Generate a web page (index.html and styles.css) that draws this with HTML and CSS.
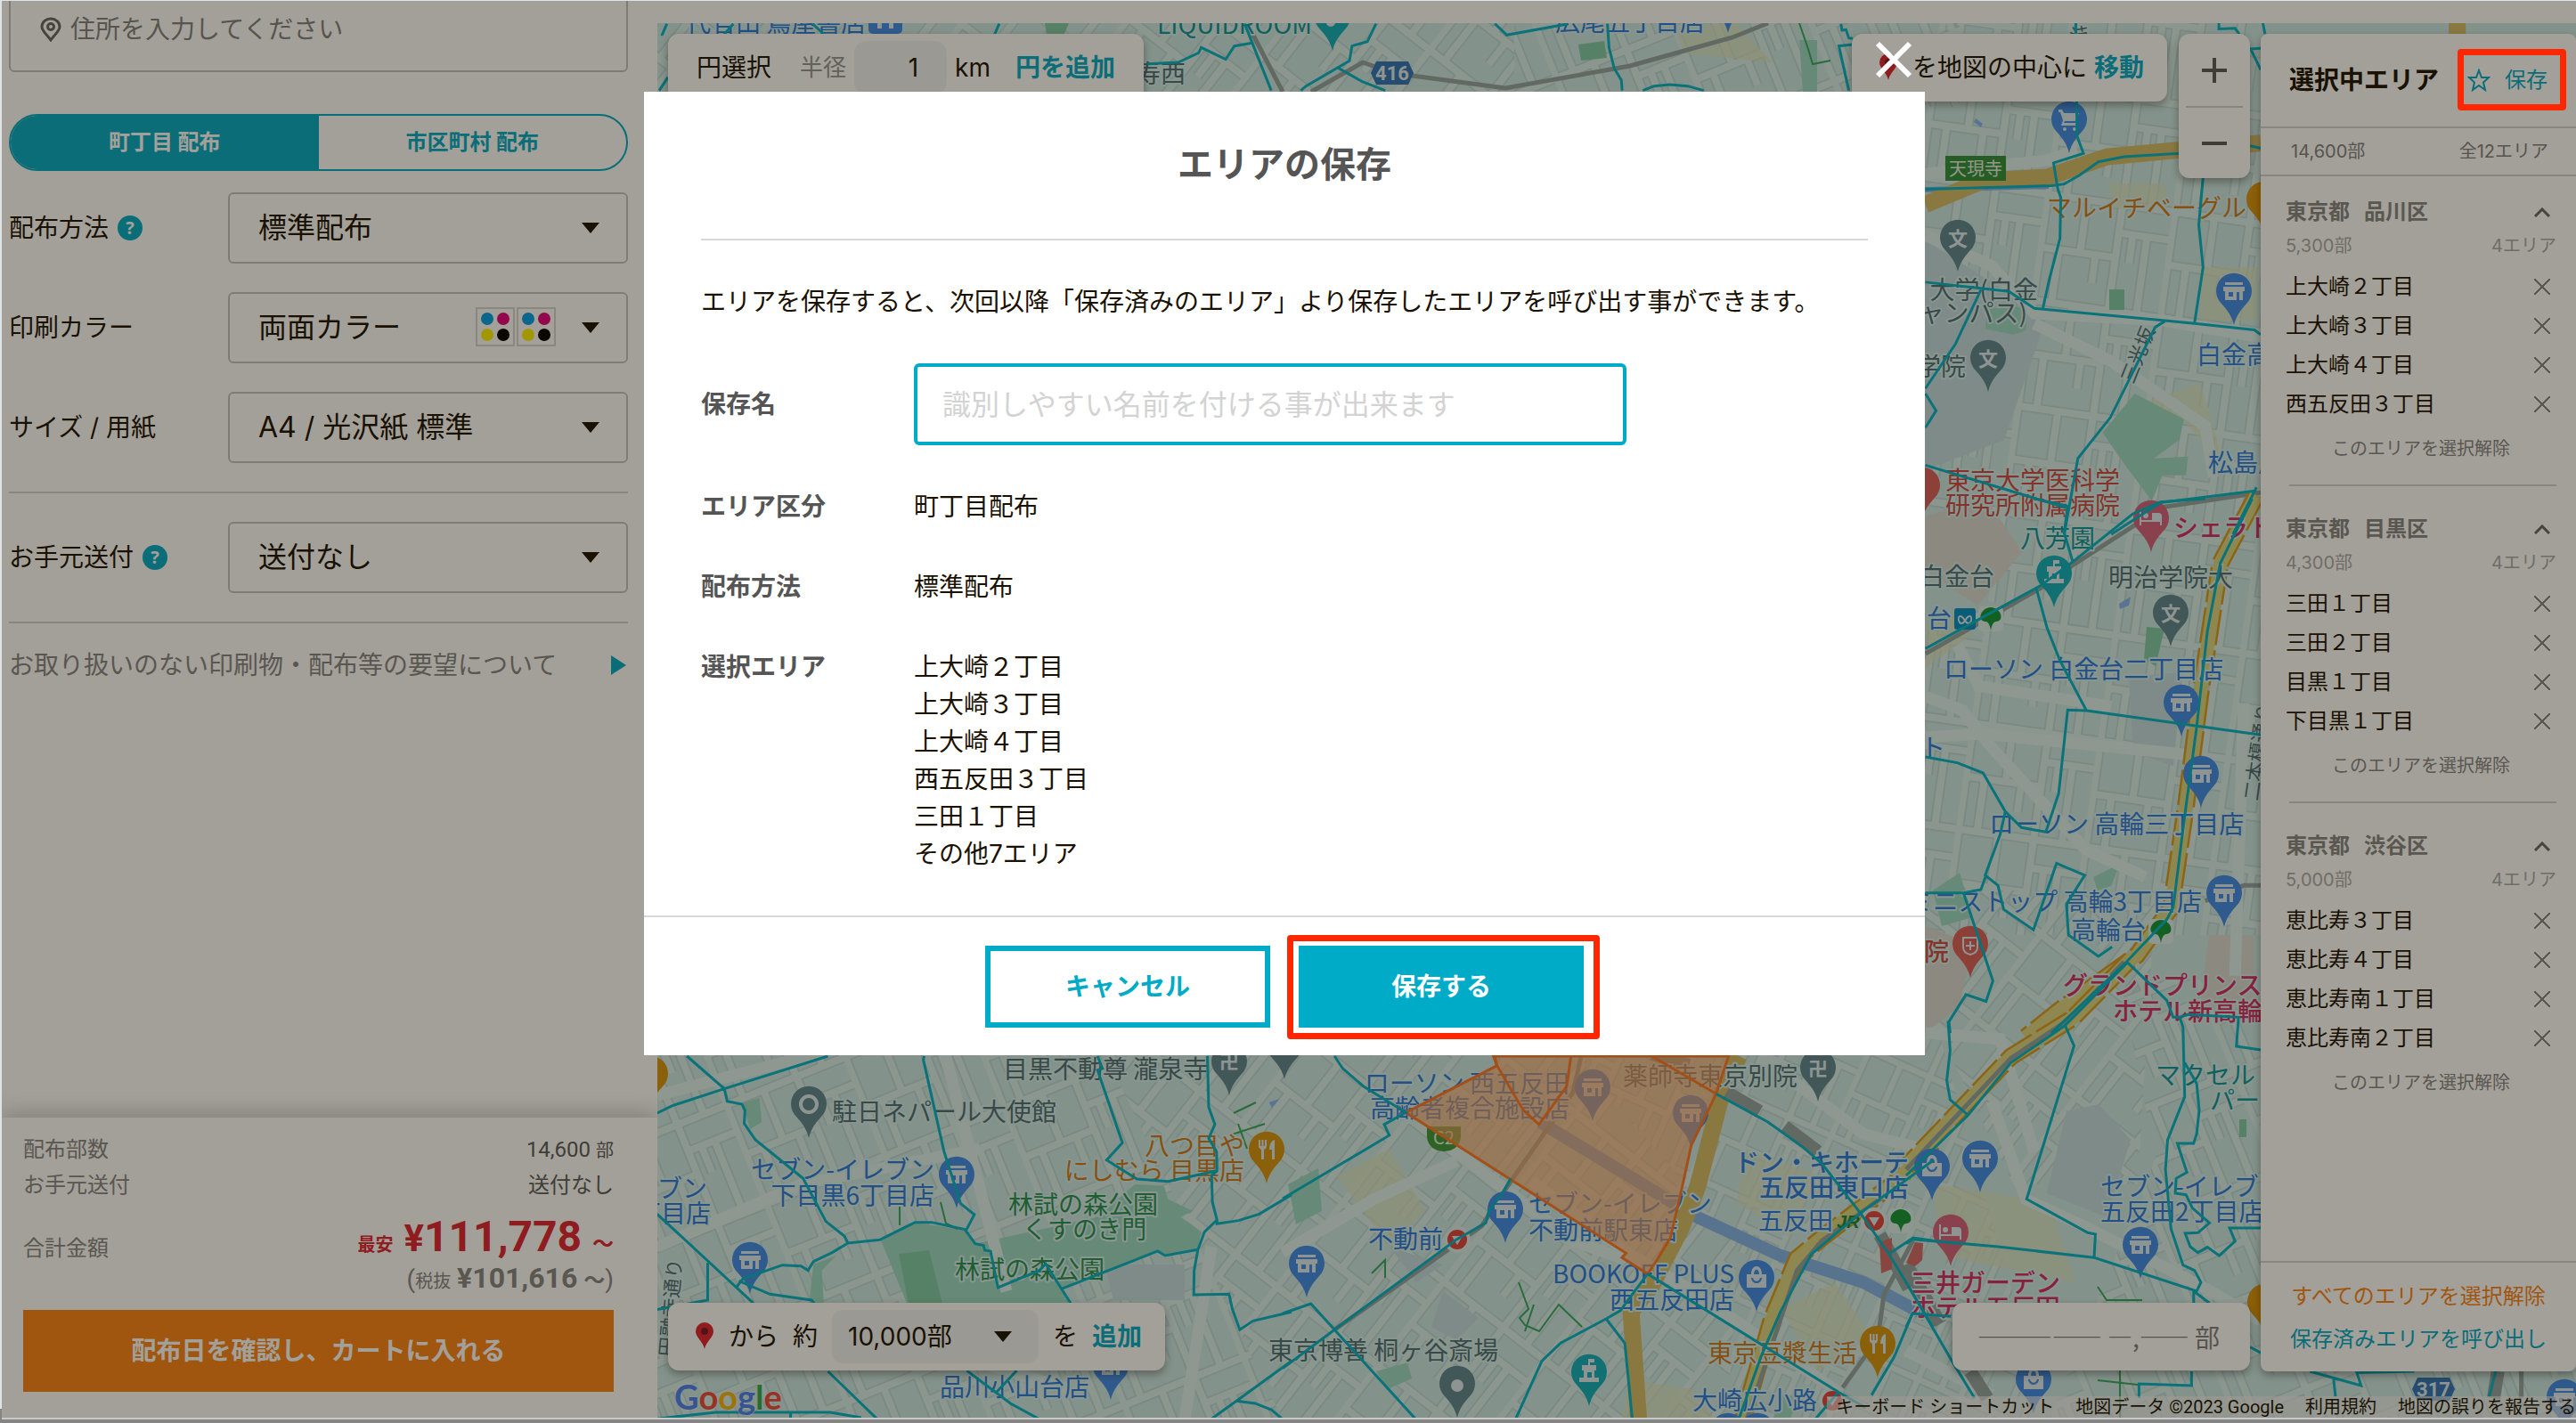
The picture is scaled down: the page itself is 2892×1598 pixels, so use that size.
FILE: index.html
```html
<!DOCTYPE html>
<html lang="ja">
<head>
<meta charset="utf-8">
<title>エリアの保存</title>
<link rel="stylesheet" href="styles.css">
</head>
<body>
<div class="app">
  <aside class="order">
    <form class="order-form">
      <label class="address">
        <svg class="address-icon" viewBox="0 0 24 28" aria-hidden="true"><path d="M12 26C8 20 2 16 2 11a10 9 0 0 1 20 0c0 5-6 9-10 15Z"/><circle cx="12" cy="11" r="3.5"/></svg>
        <input class="address-input" type="text" placeholder="住所を入力してください" aria-label="住所">
      </label>
      <div class="tabs">
        <button class="tab tab-active" type="button">町丁目 配布</button>
        <button class="tab" type="button">市区町村 配布</button>
      </div>
      <div class="fields">
        <div class="field">
          <label class="field-label" for="method">配布方法</label>
          <button class="help" type="button">?</button>
          <div class="select-box"><select id="method"><option>標準配布</option></select><span class="caret"></span></div>
        </div>
        <div class="field">
          <label class="field-label" for="color">印刷カラー</label>
          <div class="select-box"><select id="color"><option>両面カラー</option></select>
            <span class="inks"><span class="ink"><i class="c"></i><i class="m"></i><i class="y"></i><i class="k"></i></span><span class="ink"><i class="c"></i><i class="m"></i><i class="y"></i><i class="k"></i></span></span>
            <span class="caret"></span></div>
        </div>
        <div class="field">
          <label class="field-label" for="size">サイズ / 用紙</label>
          <div class="select-box"><select id="size"><option>A4 / 光沢紙 標準</option></select><span class="caret"></span></div>
        </div>
      </div>
      <div class="fields">
        <div class="field">
          <label class="field-label" for="ship">お手元送付</label>
          <button class="help" type="button">?</button>
          <div class="select-box"><select id="ship"><option>送付なし</option></select><span class="caret"></span></div>
        </div>
      </div>
      <a class="request" href="#"><span>お取り扱いのない印刷物・配布等の要望について</span><span class="request-arrow"></span></a>
    </form>
    <section class="summary">
      <dl class="totals">
        <div class="total-row"><dt>配布部数</dt><dd>14,600 <small>部</small></dd></div>
        <div class="total-row"><dt>お手元送付</dt><dd>送付なし</dd></div>
        <div class="total-row total-price"><dt>合計金額</dt><dd>
          <p class="price"><span class="price-tag">最安</span> <span class="yen">¥</span>111,778 <span class="tilde">～</span></p>
          <p class="price-net">(<small>税抜</small> <b>¥101,616</b> <span class="tilde">～</span>)</p></dd></div>
      </dl>
      <button class="cart" type="button">配布日を確認し、カートに入れる</button>
    </section>
  </aside>

  <main class="map">
    <svg class="map-canvas" viewBox="738 26 2154 1568" preserveAspectRatio="xMinYMin slice" role="img" aria-label="地図">
      <defs>
        <path id="st" d="M0 20H180M0 95H110M110 60H180M4 0V150M60 20V95M110 0V150M150 60V150M150 0V20M30 95V150M30 0V20M82 95V135M130 60V100"/>
        <pattern id="p1" width="180" height="150" patternUnits="userSpaceOnUse" patternTransform="rotate(-22) scale(.8)"><use href="#st" class="casing"/><use href="#st" class="street"/></pattern>
        <pattern id="p2" width="180" height="150" patternUnits="userSpaceOnUse" patternTransform="rotate(38) scale(.8)"><use href="#st" class="casing"/><use href="#st" class="street"/></pattern>
        <pattern id="p3" width="180" height="150" patternUnits="userSpaceOnUse" patternTransform="rotate(8) scale(.8)"><use href="#st" class="casing"/><use href="#st" class="street"/></pattern>
        <pattern id="p4" width="180" height="150" patternUnits="userSpaceOnUse" patternTransform="rotate(24) scale(.7)"><use href="#st" class="casing"/><use href="#st" class="street"/></pattern>
        <path id="pin" d="M0 0C-3-12-8-17-14-24A20 20 0 1 1 14-24C8-17 3-12 0 0Z"/>
        <path id="shop" class="glyph" d="M-10-48H10V-45H-10ZM-12-43H12V-38H10V-28H-10V-38H-12ZM-6-37V-32H-1V-37ZM3-37V-28H6V-37Z" fill-rule="evenodd"/>
        <path id="bag" class="glyph" d="M-11-42H-6C-6-54 6-54 6-42H11V-27H-11ZM-3-42H3C3-49-3-49-3-42ZM-6-38C-5-30 5-30 6-38H4C3-33-3-33-4-38Z" fill-rule="evenodd"/>
        <path id="cart" class="glyph" d="M-12-49H-8L-6-45H11L7-36H-5L-6-34H8V-31H-9L-7-37-10-46H-12Z"/>
        <path id="fork" class="glyph" d="M-9-49V-42C-9-39-7-39-6-38V-27H-3V-38C-1-39 0-40 0-42V-49H-2V-42H-3.500V-49H-5.500V-42H-7V-49ZM9-49C5-48 3-43 3-38H6V-27H9Z"/>
        <path id="bed" class="glyph" d="M-13-47H-11V-36H1V-44H8Q12-44 12-40V-30H10V-34H-11V-30H-13ZM-6-44A3 3 0 1 1-6-38 3 3 0 1 1-6-44Z"/>
        <path id="castle" class="glyph" d="M-1-53H6V-49H1V-46H8V-40H6V-32H11V-27H-11V-32H-6V-40H-8V-46H-1ZM-2-32H3V-38H-2Z" fill-rule="evenodd"/>
        <path id="shield" d="M-24 0-18-13H18L24 0 18 13H-18Z"/>
        <g id="leaf"><rect x="-14" y="-13" width="28" height="28" rx="5" class="halo"/><path class="leaf" d="M0 14C-1 8-3 4-6 4-15 4-13-11 0-12 13-11 15 4 6 4 3 4 1 8 0 14Z"/></g>
        <g id="stop"><circle r="15" class="halo"/><circle r="11" fill="#e0433f"/><path class="glyph" d="M-6-4H6L0 6Z"/></g>
      </defs>

      <rect class="land" x="738" y="26" width="2154" height="1568"/>
      <path fill="url(#p1)" d="M738 1100H1200L1440 1594H738Z"/>
      <path fill="url(#p2)" d="M1200 1100H1700L1950 1400 1940 1594H1440Z"/>
      <path fill="url(#p4)" d="M1700 1100H2160L2300 1594H1940L1950 1400Z"/>
      <path fill="url(#p3)" d="M2160 26H2540V680L2330 720 2160 640Z"/>
      <path fill="url(#p3)" d="M2160 700L2330 660 2540 680V1050H2160Z"/>
      <path fill="url(#p2)" d="M2100 1000H2420L2400 1330 2260 1330Z"/>
      <path fill="url(#p1)" d="M2380 1100H2892V1594H2300L2420 1300Z"/>
      <path fill="url(#p2)" d="M738 26H1700V120H738Z"/>
      <path fill="url(#p1)" d="M1700 26H2200V120H1700Z"/>

      <!-- town blocks and parks -->
      <g class="shops">
        <path d="M2368 206H2430L2434 232 2372 234ZM2412 450 2470 430 2500 530 2450 470ZM2470 300H2535V360H2470ZM1170 40H1230V80H1170ZM1880 30 1950 26 1990 70 1890 60ZM1500 1320 1560 1290 1600 1360 1560 1400ZM1960 1290 2040 1320 2010 1390 1950 1350ZM2000 1470 2060 1440 2100 1500 2040 1540ZM2170 1330 2300 1350 2330 1440 2180 1410ZM1830 1550 1900 1560 1925 1594H1820ZM2162 700 2220 680 2210 715 2162 750Z"/>
      </g>
      <g class="campus">
        <path d="M2161 270 2298 356 2250 494 2161 528ZM2320 1248 2356 1240 2392 1280 2365 1367 2298 1340ZM1620 1450 1660 1480 1635 1505 1607 1490ZM1560 1400 1620 1420 1590 1440ZM2390 760 2450 755 2440 860 2395 845ZM1240 1420H1330V1460H1250Z"/>
      </g>
      <path class="clinic" d="M2161 580 2230 560 2270 620 2220 680 2161 640ZM2480 1050H2530V1130H2470ZM2161 1040 2215 1060 2200 1130 2161 1160Z"/>
      <g class="park">
        <path transform="translate(720 1160) scale(.4656 .3333)" d="M577 697 660 640 780 662 805 710 1100 620 1190 510 1260 515 1270 560 1330 600 1300 620 1350 670 1342 730 1260 750 1245 735 1013 862 1035 910H640ZM245 235 285 220 290 300 262 325ZM415 780 470 750 435 800 440 910H405Z"/>
        <path transform="translate(2140 0) scale(.4796 .3827)" d="M535 1155 650 1230 640 1290 580 1345 660 1340 655 1395 600 1395 575 1470 510 1360 460 1270ZM190 905 285 900 280 970 250 982 185 965Z"/>
        <path d="M1446 1330 1480 1312 1484 1360 1455 1375ZM1990 1594 2002 1565 2018 1570 2010 1594ZM2020 45H2040V103H2024ZM2170 1000 2200 980 2215 1030 2180 1040ZM2350 985 2380 970 2370 995 2355 1000ZM1545 1540 1580 1530 1585 1548 1558 1560Z"/>
      </g>
      <path class="grove" d="M1009 1408 1043 1404 1058 1464H1020ZM2368 325H2385V348H2368ZM1772 50 1801 46 1804 65 1775 68ZM2410 704 2430 706 2420 748 2407 740ZM2514 1257H2522V1277H2514ZM1173 26H1200L1195 38H1175Z"/>
      <path class="water" d="M2218 133 2226 139 2224 143 2216 137ZM2379 678 2392 670 2390 680 2380 684ZM1425 1238 1436 1234 1428 1244Z"/>
      <path class="river" d="M1729 1260 1882 1353 1906 1367 1999 1410 2092 1440 2162 1477"/>
      <path class="river river-thin" d="M2161 213 2300 209"/>

      <!-- arterial roads -->
      <g transform="translate(1440 1160) scale(.4656 .3333)">
        <path class="avenue" d="M1150 78 1400 340 1568 400M0 740 220 560 420 430M600 500 830 740 1000 880 1340 1210M400 380 700 700 820 760"/>
        <path class="gold" d="M1100 78 1060 200 1000 520 960 660 890 850 840 940 858 1300"/>
        <path class="yellow-edge" d="M1568 370 1480 500 1300 690 1240 760 1180 960 1110 1300"/>
        <path class="yellow" d="M1568 370 1480 500 1300 690 1240 760 1180 960 1110 1300"/>
        <path class="rail" d="M720 78 700 200 550 500 480 650 125 1000M1500 500 1300 700 1240 800 1120 1300M1520 700 1450 880 1435 1030 1350 1195"/>
        <path class="rail rail-wide" d="M890 70 980 110M1070 200 1150 265M1210 315 1290 400M1440 680 1510 860"/>
      </g>
      <g transform="translate(2140 0) scale(.4796 .3827)">
        <path class="avenue" d="M45 510 330 470 400 440M45 690 200 780 300 920 600 940 830 990M300 950 480 1060 700 1250 720 1400"/>
        <path class="gold" d="M45 600 180 530 330 520 470 460 640 440 830 420M1290 60V110"/>
      </g>
      <g transform="translate(2140 560) scale(.4796 .3827)">
        <path class="avenue" d="M120 430 170 550 480 610M45 580 130 620 200 730 420 1030 560 1110M790 600 770 1400M45 700 180 690 650 750"/>
        <path class="rail" d="M45 455 315 262 390 195 600 25 840-20M700 1180 790 1135H840"/>
        <path class="yellow-edge" d="M820-10 735 190 690 560 655 900 620 1200 540 1340 360 1500 280 1580"/>
        <path class="yellow" d="M820-10 735 190 690 560 655 900 620 1200 540 1340 360 1500 280 1580"/>
      </g>
      <g transform="translate(2140 1080) scale(.4796 .3333)">
        <path class="avenue" d="M45 240 220 260 300 640M200 470 280 800 430 900 700 1100 830 1210M0 1310 200 1460"/>
        <path class="yellow-edge" d="M520 0 390 190 245 320 0 690"/>
        <path class="yellow" d="M520 0 390 190 245 320 0 690"/>
        <path class="rail" d="M510 0 385 190 245 325 0 700M1440 1380V1470"/>
        <path class="rail rail-wide" d="M0 1020 80 1220M150 1380 190 1470M1385 1380 1375 1470"/>
      </g>
      <path class="rail" d="M1472 103 1530 70 1563 82 1690 99 1830 74 1945 42 1985 26M1400 26 1440 103"/>
      <path class="avenue" d="M738 1400 900 1330 1100 1290M738 1230 930 1180M850 1530 1000 1500 1200 1560M1060 1180 1130 1450M1330 1594 1360 1400"/>
      <path class="trail" d="M1010 1350V1376M1056 1350 1062 1374 1075 1380M1705 1440 1716 1470 1706 1480 1712 1488 1728 1495 1750 1465 1776 1490M1712 1495 1722 1465M1385 1250 1410 1238M1380 1275 1420 1262M1390 1262 1400 1290M2020 26 2030 55 2035 72 2055 68M2355 1445 2365 1460H2405M2355 1550 2400 1555M2380 1530V1594M1540 1430 1555 1415V1435"/>

      <!-- pins -->
      <g class="pin-blue">
        <g transform="translate(2323 172)"><use href="#pin"/><use href="#cart"/><circle class="glyph" cx="-5" cy="-27" r="2"/><circle class="glyph" cx="6" cy="-27" r="2"/></g>
        <g transform="translate(2508 365)"><use href="#pin"/><use href="#shop"/></g>
        <g transform="translate(2449 827)"><use href="#pin"/><use href="#shop"/></g>
        <g transform="translate(2471 907)"><use href="#pin"/><use href="#shop"/></g>
        <g transform="translate(2497 1041)"><use href="#pin"/><use href="#shop"/></g>
        <g transform="translate(2169 1348)"><use href="#pin"/><use href="#bag"/></g>
        <g transform="translate(2223 1339)"><use href="#pin"/><use href="#shop"/></g>
        <g transform="translate(2403 1436)"><use href="#pin"/><use href="#shop"/></g>
        <g transform="translate(2283 1587)"><use href="#pin"/><use href="#bag"/></g>
        <g transform="translate(2879 1607)"><use href="#pin"/><use href="#shop"/></g>
        <g transform="translate(1074 1357)"><use href="#pin"/><use href="#shop"/></g>
        <g transform="translate(842 1453)"><use href="#pin"/><use href="#shop"/></g>
        <g transform="translate(1247 1572)"><use href="#pin"/><use href="#shop"/></g>
        <g transform="translate(1788 1259)"><use href="#pin"/><use href="#shop"/></g>
        <g transform="translate(1898 1288)"><use href="#pin"/><use href="#shop"/></g>
        <g transform="translate(1690 1396)"><use href="#pin"/><use href="#shop"/></g>
        <g transform="translate(1467 1457)"><use href="#pin"/><use href="#shop"/></g>
        <g transform="translate(1972 1473)"><use href="#pin"/><use href="#bag"/></g>
        <use href="#pin" x="1940" y="37"/><use href="#pin" x="1940" y="1645"/><use href="#pin" x="1973" y="1645"/>
        <rect x="975" y="10" width="38" height="28" rx="5"/><path class="glyph" d="M985 26H990V32H985ZM998 26H1003V32H998Z"/>
      </g>
      <g class="pin-slate">
        <use href="#pin" x="2198" y="305"/><text class="pin-text" x="2198" y="276">文</text>
        <use href="#pin" x="2232" y="440"/><text class="pin-text" x="2232" y="411">文</text>
        <use href="#pin" x="2437" y="726"/><text class="pin-text" x="2437" y="697">文</text>
        <use href="#pin" x="1380" y="1230"/><text class="pin-text" x="1380" y="1200">卍</text>
        <use href="#pin" x="2041" y="1237"/><text class="pin-text" x="2041" y="1208">卍</text>
        <use href="#pin" x="1442" y="1212"/>
        <use href="#pin" x="908" y="1278"/><circle class="ring" cx="908" cy="1240" r="9"/>
        <use href="#pin" x="1636" y="1592"/><circle class="glyph" cx="1636" cy="1556" r="7"/>
      </g>
      <g class="pin-orange">
        <use href="#pin" x="2542" y="262"/><use href="#pin" x="2543" y="1500"/><use href="#pin" x="730" y="1244"/>
        <g transform="translate(1422 1329)"><use href="#pin"/><use href="#fork"/></g>
        <g transform="translate(2108 1547)"><use href="#pin"/><use href="#fork"/></g>
      </g>
      <g class="pin-pink">
        <g transform="translate(2415 620)"><use href="#pin"/><use href="#bed"/></g>
        <g transform="translate(2190 1422)"><use href="#pin"/><use href="#bed"/></g>
      </g>
      <g class="pin-teal">
        <g transform="translate(2306 682)"><use href="#pin"/><use href="#castle"/></g>
        <g transform="translate(1784 1579)"><use href="#pin"/><use href="#castle"/></g>
        <use href="#pin" x="1496" y="57"/><circle class="glyph" cx="1494" cy="25" r="5"/>
      </g>
      <g class="pin-red">
        <use href="#pin" x="2158" y="583"/>
        <use href="#pin" x="2212" y="1098"/><path class="ring-thin" d="M2204 1053H2220V1064Q2220 1070 2212 1072 2204 1070 2204 1064ZM2212 1057V1067M2207 1062H2217"/>
      </g>
      <path d="M2150 1395 2159 1396 2158 1415 2150 1422 2140 1418ZM2110 1395 2124 1390V1425L2112 1430Z" fill="#d3696b"/>

      <!-- station marks and road shields -->
      <use href="#leaf" x="2235" y="694"/><use href="#leaf" x="2426" y="1045"/><use href="#leaf" x="2134" y="1370"/>
      <use href="#stop" x="1636" y="1392"/><use href="#stop" x="2104" y="1371"/><use href="#stop" x="2057" y="1573"/>
      <rect x="2194" y="683" width="24" height="24" rx="3" fill="#008fc9"/><path class="ring-thin" d="M2206 697C2200 687 2197 694 2200 699 2203 702 2206 697 2206 697 2212 687 2215 694 2212 699 2209 702 2206 697 2206 697"/>
      <use href="#shield" x="1563" y="82" class="route"/><text class="route-text" x="1563" y="90">416</text>
      <use href="#shield" x="2732" y="1560" class="route"/><text class="route-text" x="2732" y="1568">317</text>
      <rect x="2184" y="175" width="68" height="28" fill="#2f8f3c"/><text class="sign" x="2218" y="197">天現寺</text>
      <path d="M1602 1265H1640V1277Q1638 1292 1621 1293 1604 1292 1602 1277Z" fill="#3c9a3a"/><text class="sign" x="1621" y="1285">C2</text>
      <text class="jr" x="2062" y="1379">JR</text>

      <!-- labels -->
      <g class="label blue">
        <text x="770" y="36">代官山 蔦屋書店</text><text x="1746" y="35">広尾五丁目店</text>
        <text x="2466" y="409">白金高輪</text><text x="2479" y="530">松島屋</text>
        <text x="2163" y="705">台</text><text x="2182" y="762">ローソン 白金台二丁目店</text>
        <text x="2156" y="850">ト</text><text x="2233" y="936">ローソン 高輪三丁目店</text>
        <text x="2472" y="1023" class="end">ミニストップ 高輪3丁目店</text><text x="2409" y="1055" class="end">高輪台</text>
        <text x="2358" y="1343">セブン-イレブン</text><text x="2358" y="1371">五反田2丁目店</text>
        <text x="1049" y="1324" class="end">セブン-イレブン</text><text x="1049" y="1353" class="end">下目黒6丁目店</text>
        <text x="738" y="1345">ブン</text><text x="798" y="1373" class="end">丁目店</text>
        <text x="1055" y="1568">品川小山台店</text>
        <text x="1762" y="1227" class="end">ローソン 西五反田</text><text x="1762" y="1255" class="end">高齢者複合施設店</text>
        <text x="1620" y="1402" class="end">不動前</text><text x="1716" y="1362">セブン-イレブン</text><text x="1716" y="1392">不動前駅東店</text>
        <text x="1947" y="1441" class="end">BOOKOFF PLUS</text><text x="1947" y="1470" class="end">西五反田店</text>
        <text x="2058" y="1381" class="end">五反田</text><text x="2040" y="1583" class="end">大崎広小路</text>
        <g class="strong"><text x="2143" y="1316" class="end">ドン・キホーテ</text><text x="2143" y="1344" class="end">五反田東口店</text></g>
      </g>
      <g class="label slate">
        <text x="1331" y="93" class="end">寿西</text><text x="2288" y="336" class="end">大学(白金</text><text x="2276" y="362" class="end">ャンパス)</text>
        <text x="2207" y="422" class="end">学院</text><text x="2239" y="658" class="end">白金台</text><text x="2367" y="659">明治学院大</text>
        <text x="1126" y="1211">目黒不動尊 瀧泉寺</text><text x="934" y="1259">駐日ネパール大使館</text>
        <text x="1424" y="1527">東京博善 桐ヶ谷斎場</text><text x="1822" y="1219">薬師寺東京別院</text>
        <text class="street-name" transform="translate(2395 432) rotate(-68)">三光坂</text>
        <text class="street-name" transform="translate(2535 900) rotate(-82)">二本榎通り</text>
        <text class="street-name" transform="translate(756 1524) rotate(-85)">円融寺通り</text>
        <text class="street-name" transform="translate(2324 30) rotate(80)">坂</text>
      </g>
      <g class="label orange">
        <text x="2298" y="244">マルイチベーグル</text><text x="1397" y="1297" class="end">八つ目や</text>
        <text x="1397" y="1325" class="end">にしむら 目黒店</text><text x="1917" y="1530">東京豆漿生活</text>
      </g>
      <g class="label green">
        <text x="1132" y="1363">林試の森公園</text><text x="1148" y="1391">くすのき門</text><text x="1072" y="1436">林試の森公園</text>
      </g>
      <g class="label teal">
        <text x="1299" y="38">LIQUIDROOM</text><text x="2268" y="615">八芳園</text><text x="2420" y="1218">マクセル</text><text x="2481" y="1246">パーク</text>
      </g>
      <g class="label red"><text x="2184" y="550">東京大学医科学</text><text x="2184" y="578">研究所附属病院</text><text x="2160" y="1079" class="strong">院</text></g>
      <g class="label pink strong">
        <text x="2440" y="603">シェラトン</text><text x="2316" y="1117">グランドプリンス</text><text x="2372" y="1146">ホテル新高輪</text>
        <text x="2145" y="1451">三井ガーデン</text><text x="2145" y="1479">ホテル五反田</text>
      </g>

      <!-- selected area -->
      <g transform="translate(1440 1160) scale(.4656 .3333)" class="picked">
        <path class="picked-fill" d="M508 78 517 110 297 268 828 742 818 757 880 812 905 760 935 690 960 540 985 380 1045 205 1075 78Z"/>
        <path d="M508 60 517 110 580 260 618 308 685 180 697 60M890 78 1045 205"/>
      </g>

      <!-- area boundaries, one group per tile -->
      <g class="bounds">
        <g transform="translate(720 1160) scale(.4656 .3333)">
          <path d="M38 270 75 245 200 188 450 78M110 78 200 188 207 230 243 240 250 262 248 305 275 360 390 490 445 635 490 685 498 708 575 697 660 638 700 638 780 662 805 710 825 716 828 732 842 735 860 858 960 800 975 778 1013 862 1035 910M1013 862 1245 735 1263 750 1342 730M682 78 680 90 730 400 770 575 803 612 783 665M498 708 460 740 415 770 402 800 385 785 340 782 245 828 230 855M38 610 270 910M160 775V900L38 932M235 835 310 880 410 900 417 910"/>
          <path d="M1100 78 1112 120 1100 125 1160 370 1122 428 1195 492 1270 500 1385 465M1365 78 1368 250 1383 308 1368 355 1387 400 1388 465 1375 480 1377 570 1388 630V643L1440 632 1490 610 1568 545M1388 630 1358 670 1342 730 1333 800 1332 882 1417 880 1425 930 1443 1000 1475 970 1568 940M1568 1105 1435 1240 1480 1248 1520 1270 1545 1300M1435 1240 1375 1300M450 1140 568 1300M785 1138 890 1248 958 1300M905 1138 855 1212M38 1300 180 1278H455L530 1296M360 1278V1300"/>
        </g>
        <g transform="translate(1440 1160) scale(.4656 .3333)">
          <path d="M125 78 145 120 195 180 297 268 245 308 257 345 0 558M0 945 68 912 125 1000 320 1300M550 490 530 540 497 600 490 640 420 695 125 1000 0 1130M880 812 1340 1210 1405 1262M880 812 830 905 815 935 780 963 670 1045 625 1105 562 1300M780 963 825 1045 843 1300M1045 205 1170 300 1255 385 1300 440 1350 530 1395 610 1462 745 1568 990M1568 430 1395 605 1275 745 1200 940 1155 1085 1100 1300M1568 700 1520 690 1462 745M1520 940 1475 1090 1420 1220M1340 1210 1285 1300"/>
        </g>
        <g transform="translate(2140 0) scale(.4796 .3827)">
          <path d="M732 68V85L770 83 780 100M835 68 840 100M397 68 400 400 415 450 345 478 355 555 362 580 360 700 335 820 320 905M45 555 340 545 370 540 405 515 450 475 510 460 640 450M805 428 830 435M45 828 240 855 300 905 600 940 680 950 815 968 830 982M175 850 115 1010 45 1140M45 1155 70 1205 45 1255M695 520 685 660 695 785 675 948M605 943 583 960 478 1225 402 1345 370 1568M45 1365 375 1490M480 1568 595 1475 820 1440M820 1430 765 1568M805 140 830 205M805 144 830 142"/>
        </g>
        <g transform="translate(2140 560) scale(.4796 .3827)">
          <path d="M45 440 315 255 390 185 530 45 595 10 700 0M300 0 378 22 370 100 390 185M305 265 330 380 360 475 422 622M810 0 735 190 705 390 680 670 650 950 625 1200 610 1235 515 1360 340 1568M422 622 378 620 357 865 327 978 270 965 232 918 180 805 120 775 45 758M422 622 830 693M232 918 220 985 185 1105 215 1135 228 1205 298 1265 352 1070 418 1105 375 1190 380 1280 450 1343 482 1315M45 1157H135L175 1147 187 1105M135 1160 203 1415 187 1475 140 1455 100 1535 103 1568"/>
        </g>
        <g transform="translate(2140 1080) scale(.4796 .3333)">
          <path d="M98 200 103 300 95 400 103 465 145 517M520 0 372 215 245 340 145 517 0 720M372 215 393 283 282 800 425 913 443 918 440 997 680 1110 690 1080 675 1040 648 1022 620 900 607 700 612 600 652 455 648 220 640 187 660 178 778 187 773 285 830 297M520 5 610 130 625 187H640M652 340 680 410 686 500 680 580 673 612H635L657 710 632 730 630 780 655 785 670 830 710 880 683 913 653 915 665 960 683 980 705 962 733 990 770 942 757 897H830M440 997 215 960 15 935 0 950M673 1110V1150M673 1110 710 1150M0 1080 105 1340 160 1470M0 1230 15 1185 105 1195M545 1470V1422L668 1428V1380M805 1298 830 1318M945 1380 1065 1428 1055 1385 1190 1380M1000 1400 1005 1465M1380 1380 1365 1465"/>
        </g>
        <g transform="translate(720 0) scale(.574 .3333)">
          <path d="M690 120 700 80M35 305 52 260M50 80 40 120M160 120 180 80M335 80 360 120M1290 305 1300 290 1362 228 1410 275 1455 305M1180 80 1195 145 1232 305M1437 80 1420 140 1390 155 1385 205 1362 228M989 215 1050 210 1090 178 1095 160 1143 200 1160 155 1195 145"/>
        </g>
        <g transform="translate(1560 0) scale(.4464 .3333)">
          <path d="M265 80 295 118 450 80M548 80 552 160 565 230 583 270 585 305M637 305 665 290 705 285 750 290 790 305M1135 80 1138 102 1148 100 1155 128 1165 130M1165 150 1130 155 1155 305"/>
        </g>
      </g>
    </svg>

    <div class="map-top">
      <form class="pill circle-tool">
        <label for="radius">円選択</label><span class="muted">半径</span>
        <input id="radius" class="radius" type="text" value="1"><span>km</span>
        <button class="link-button" type="button">円を追加</button>
      </form>
      <div class="map-top-right">
        <div class="pill center-tool"><svg class="pin-mark" viewBox="0 0 22 32" aria-hidden="true"><path d="M11 30C9 21 1 17 1 10a10 10 0 0 1 20 0c0 7-8 11-10 20Z"/><circle cx="11" cy="10" r="4"/></svg><span>を地図の中心に</span><button class="link-button" type="button">移動</button></div>
        <div class="zoomer">
          <button type="button" aria-label="拡大"><svg viewBox="0 0 28 28"><path d="M0 14H28M14 0V28"/></svg></button>
          <button type="button" aria-label="縮小"><svg viewBox="0 0 28 28"><path d="M0 14H28"/></svg></button>
        </div>
      </div>
    </div>

    <aside class="areas">
      <header class="areas-head"><h2>選択中エリア</h2><button class="save-link" type="button"><svg viewBox="0 0 26 26" aria-hidden="true"><path d="M13 2 16 10H24L18 15.500 20 24 13 19 6 24 8 15.500 2 10H10Z"/></svg>保存</button></header>
      <p class="areas-count"><span>14,600部</span><span>全12エリア</span></p>
      <div class="areas-list">
        <section class="group">
          <h3><span>東京都</span><span>品川区</span><svg viewBox="0 0 18 11"><path d="M1 10 9 2 17 10"/></svg></h3>
          <p class="group-count"><span>5,300部</span><span>4エリア</span></p>
          <ul>
            <li>上大崎２丁目<button type="button" aria-label="解除"></button></li>
            <li>上大崎３丁目<button type="button" aria-label="解除"></button></li>
            <li>上大崎４丁目<button type="button" aria-label="解除"></button></li>
            <li>西五反田３丁目<button type="button" aria-label="解除"></button></li>
          </ul>
          <a class="release" href="#">このエリアを選択解除</a>
        </section>
        <section class="group">
          <h3><span>東京都</span><span>目黒区</span><svg viewBox="0 0 18 11"><path d="M1 10 9 2 17 10"/></svg></h3>
          <p class="group-count"><span>4,300部</span><span>4エリア</span></p>
          <ul>
            <li>三田１丁目<button type="button" aria-label="解除"></button></li>
            <li>三田２丁目<button type="button" aria-label="解除"></button></li>
            <li>目黒１丁目<button type="button" aria-label="解除"></button></li>
            <li>下目黒１丁目<button type="button" aria-label="解除"></button></li>
          </ul>
          <a class="release" href="#">このエリアを選択解除</a>
        </section>
        <section class="group">
          <h3><span>東京都</span><span>渋谷区</span><svg viewBox="0 0 18 11"><path d="M1 10 9 2 17 10"/></svg></h3>
          <p class="group-count"><span>5,000部</span><span>4エリア</span></p>
          <ul>
            <li>恵比寿３丁目<button type="button" aria-label="解除"></button></li>
            <li>恵比寿４丁目<button type="button" aria-label="解除"></button></li>
            <li>恵比寿南１丁目<button type="button" aria-label="解除"></button></li>
            <li>恵比寿南２丁目<button type="button" aria-label="解除"></button></li>
          </ul>
          <a class="release" href="#">このエリアを選択解除</a>
        </section>
      </div>
      <footer class="areas-foot"><a class="clear" href="#">すべてのエリアを選択解除</a><a class="recall" href="#">保存済みエリアを呼び出し</a></footer>
    </aside>

    <div class="map-bottom">
      <form class="pill amount-tool">
        <svg class="pin-mark" viewBox="0 0 22 32" aria-hidden="true"><path d="M11 30C9 21 1 17 1 10a10 10 0 0 1 20 0c0 7-8 11-10 20Z"/><circle cx="11" cy="10" r="4"/></svg>
        <span>から</span><label for="amount">約</label>
        <span class="amount"><select id="amount"><option>10,000部</option></select><span class="caret"></span></span>
        <span>を</span><button class="link-button" type="button">追加</button>
      </form>
      <div class="pill readout">————— —,—— 部</div>
    </div>
    <p class="logo"><span class="g1">G</span><span class="g2">o</span><span class="g3">o</span><span class="g1">g</span><span class="g4">l</span><span class="g2">e</span></p>
    <p class="credits"><a href="#">キーボード ショートカット</a><span>地図データ ©2023 Google</span><a href="#">利用規約</a><a href="#">地図の誤りを報告する</a></p>
  </main>

  <div class="overlay">
    <form class="modal" role="dialog" aria-labelledby="modal-title">
      <button class="close" type="button" aria-label="閉じる"><svg viewBox="0 0 42 42"><path d="M3 3 39 39M39 3 3 39"/></svg></button>
      <div class="modal-body">
        <h1 id="modal-title">エリアの保存</h1>
        <p class="lead">エリアを保存すると、次回以降「保存済みのエリア」より保存したエリアを呼び出す事ができます。</p>
        <div class="name-row"><label for="name">保存名</label><input id="name" type="text" placeholder="識別しやすい名前を付ける事が出来ます"></div>
        <dl class="details">
          <dt>エリア区分</dt><dd>町丁目配布</dd>
          <dt>配布方法</dt><dd>標準配布</dd>
          <dt>選択エリア</dt><dd>上大崎２丁目<br>上大崎３丁目<br>上大崎４丁目<br>西五反田３丁目<br>三田１丁目<br>その他7エリア</dd>
        </dl>
      </div>
      <footer class="modal-foot">
        <button class="btn btn-ghost" type="button">キャンセル</button>
        <span class="marked"><button class="btn" type="submit">保存する</button><i class="mark mark-save"></i></span>
      </footer>
    </form>
    <i class="mark mark-star"></i>
  </div>
</div>
</body>
</html>
```
FILE: styles.css
```css
:root {
  --ink: #1a1103;
  --teal: #00abc7;
  --line: #d8d8d8;
  --mark: #ff2600;
}
* { box-sizing: border-box; }
body {
  margin: 0;
  height: 100vh;
  padding: 1px 0 4px 2px;
  font-family: Inter, "Noto Sans CJK JP", sans-serif;
  font-size: 28px;
  line-height: 42px;
  color: var(--ink);
  background: linear-gradient(#e0e4e6 0 99%, #858585 99%);
}
h1, h2, h3, p, ul, dl, dd { margin: 0; padding: 0; font-weight: inherit; font-size: inherit; }
ul { list-style: none; }
a { color: inherit; text-decoration: none; }
button, input, select { font: inherit; color: inherit; margin: 0; padding: 0; border: 0; background: none; }
select { appearance: none; outline: 0; }
i { font-style: normal; }

.app {
  position: relative;
  display: flex;
  height: 100%;
  overflow: hidden;
  background: #fff;
  border-bottom: 2px solid #c9c9c9;
}

/* order panel */
.order { flex: none; width: 736px; display: flex; flex-direction: column; justify-content: space-between; }
.order-form { padding: 0 33px 0 8px; }
.address {
  display: flex;
  align-items: center;
  gap: 10px;
  height: 96px;
  margin-top: -16px;
  padding-left: 33px;
  border: 2px solid #c4c4c4;
  border-radius: 6px;
}
.address-icon { width: 24px; height: 28px; fill: none; stroke: #666; stroke-width: 3; }
.address-input { flex: 1; height: 60px; }
.address-input::placeholder { color: #808080; opacity: 1; }
.tabs { display: flex; height: 64px; margin: 47px 0 24px; border: 2px solid var(--teal); border-radius: 32px; overflow: hidden; }
.tab { flex: 1; font-size: 24px; font-weight: 700; color: var(--teal); line-height: 60px; }
.tab-active { background: var(--teal); color: #fff; }
.fields { display: flex; flex-direction: column; gap: 32px; padding-bottom: 32px; margin-bottom: 32px; border-bottom: 2px solid #d2d2d2; }
.field { display: flex; align-items: center; height: 80px; }
.help { width: 28px; height: 28px; margin-left: 10px; border-radius: 50%; background: var(--teal); color: #fff; font: 700 20px/28px "Open Sans", sans-serif; }
.select-box { position: relative; width: 449px; height: 80px; margin-left: auto; border: 2px solid #c4c4c4; border-radius: 6px; }
.select-box select { width: 100%; height: 76px; padding: 0 32px; font-size: 32px; }
.caret { position: absolute; right: 30px; top: 50%; margin-top: -6px; border: 10px solid transparent; border-top: 12px solid var(--ink); border-bottom: 0; pointer-events: none; }
.inks { position: absolute; right: 79px; top: 15px; display: flex; gap: 2px; }
.ink { display: grid; grid-template-columns: 14px 14px; gap: 4px; padding: 4px; border: 2px solid #d5d5d5; }
.ink i { width: 14px; height: 14px; border-radius: 50%; }
.c { background: #009fe8; }
.m { background: #e4007f; }
.y { background: #fff100; }
.k { background: #000; }
.request { display: flex; justify-content: space-between; align-items: center; margin-top: -6px; padding-right: 2px; color: #858585; }
.request-arrow { border: 11px solid transparent; border-left: 17px solid var(--teal); border-right: 0; }

.summary { padding: 16px 49px 29px 24px; box-shadow: 0 -6px 22px rgba(0, 0, 0, .2); }
.totals { font-size: 24px; line-height: 40px; color: #858585; margin-bottom: 12px; }
.total-row { display: flex; justify-content: space-between; align-items: center; }
.total-row dd { color: #5a5a5a; font-family: Roboto, "Noto Sans CJK JP", sans-serif; text-align: right; }
.total-row small { font-size: 20px; line-height: 20px; }
.total-price { margin-top: 12px; }
.total-price dt { padding-bottom: 18px; }
.price { font-size: 48px; font-weight: 700; line-height: 52px; color: #de2535; }
.price span { line-height: 20px; }
.price-tag { font-size: 20px; }
.price .yen { font-size: 42px; }
.tilde { font-size: 24px; line-height: 20px; font-weight: 700; }
.price-net { font-size: 28px; line-height: 44px; color: #858585; }
.price-net b { font-size: 32px; line-height: 20px; }
.cart { width: 100%; height: 92px; background: #fb8417; color: #fff; font-weight: 700; }

/* map */
.map { position: relative; flex: 1; margin-top: 25px; overflow: hidden; display: flex; flex-direction: column; justify-content: space-between; }
.map-canvas { position: absolute; inset: 0; width: 100%; height: 100%; font-family: "Noto Sans CJK JP", sans-serif; }
.land { fill: #cae8e5; }
.casing { fill: none; stroke: #b9d5d5; stroke-width: 14; }
.street { fill: none; stroke: #d6eeec; stroke-width: 10; }
.avenue { fill: none; stroke: #dcf2f1; stroke-width: 13; vector-effect: non-scaling-stroke; }
.shops { fill: #dce4bd; opacity: .6; }
.campus { fill: #c1dde2; }
.clinic { fill: #d9d9d4; }
.park { fill: #9bdac6; }
.grove { fill: #80cba8; }
.water { fill: #82b4f5; }
.river { fill: none; stroke: #82b4ec; stroke-width: 14; }
.river-thin { stroke-width: 6; }
.gold { fill: none; stroke: #d5bd6c; stroke-width: 19; vector-effect: non-scaling-stroke; }
.yellow-edge { fill: none; stroke: #d79c24; stroke-width: 20; stroke-dasharray: 40 6; vector-effect: non-scaling-stroke; }
.yellow { fill: none; stroke: #dcd784; stroke-width: 15; vector-effect: non-scaling-stroke; }
.rail { fill: none; stroke: #93a4a3; stroke-width: 5; vector-effect: non-scaling-stroke; }
.rail-wide { stroke-width: 15; }
.trail { fill: none; stroke: #35a862; stroke-width: 2; }
.glyph { fill: #dcecf2; }
.halo { fill: #dcefee; }
.leaf { fill: #12953a; }
.ring { fill: none; stroke: #dcecf2; stroke-width: 4; }
.ring-thin { fill: none; stroke: #dcecf2; stroke-width: 2; }
.pin-blue { fill: #3f8bea; }
.pin-slate { fill: #5c8591; }
.pin-orange { fill: #d8940f; }
.pin-pink { fill: #d3617f; }
.pin-teal { fill: #0fb0bd; }
.pin-red { fill: #d9605c; }
.pin-text { fill: #dcecf2; font-size: 22px; font-weight: 700; text-anchor: middle; }
.route { fill: #2f74b9; }
.route-text { fill: #dcecf2; font: 700 22px Roboto, sans-serif; text-anchor: middle; }
.sign { fill: #e4f2e4; font-size: 20px; text-anchor: middle; }
.jr { fill: #12883a; font: italic 700 20px "Liberation Sans", sans-serif; }
.label { font-size: 28px; stroke: #d3eeee; stroke-width: 4; paint-order: stroke; stroke-linejoin: round; }
.end { text-anchor: end; }
.strong { font-weight: 500; }
.street-name { font-size: 22px; }
.blue { fill: #2879dc; }
.slate { fill: #4e6e77; }
.orange { fill: #cd7a1c; }
.green { fill: #239152; }
.teal { fill: #0b959c; }
.red { fill: #cd4a45; }
.pink { fill: #d12c66; }
.picked { fill: none; stroke: #ff7929; stroke-width: 3; }
.picked path { vector-effect: non-scaling-stroke; }
.picked-fill { fill: rgba(255, 165, 100, .6); }
.bounds path { fill: none; stroke: #00b4c8; stroke-width: 3; vector-effect: non-scaling-stroke; }

.pill { display: flex; align-items: center; height: 76px; background: #fff; border-radius: 12px; box-shadow: 0 4px 10px rgba(0, 0, 0, .35); }
.map-top { position: relative; display: flex; justify-content: space-between; align-items: flex-start; padding: 12px 366px 0 12px; }
.map-top-right { display: flex; gap: 13px; }
.link-button { color: var(--teal); font-weight: 700; }
.muted { color: #949494; font-size: 26px; }
.circle-tool { padding: 0 32px; }
.circle-tool .muted { margin: 0 9px 0 32px; }
.radius { width: 104px; height: 60px; margin-right: 9px; padding-right: 32px; border-radius: 14px; background: #f1f4f4; text-align: right; }
.circle-tool .link-button { margin-left: 28px; }
.center-tool { padding: 0 26px 0 30px; }
.center-tool .link-button { margin-left: 8px; }
.pin-mark { width: 22px; height: 32px; margin-right: 16px; fill: #de2535; }
.pin-mark circle { fill: #7c1420; }
.zoomer { width: 80px; height: 162px; padding: 0 8px; background: #fff; border-radius: 12px; box-shadow: 0 4px 10px rgba(0, 0, 0, .35); }
.zoomer button { display: flex; width: 64px; height: 81px; align-items: center; justify-content: center; }
.zoomer button + button { border-top: 2px solid #d2d2d2; }
.zoomer svg { width: 28px; height: 28px; fill: none; stroke: #5a5a5a; stroke-width: 4; }

.map-bottom { position: relative; display: flex; justify-content: space-between; padding: 0 366px 53px 12px; }
.amount-tool { padding: 0 26px 0 30px; }
.amount-tool label { margin: 0 16px; }
.amount { position: relative; width: 232px; height: 60px; margin-right: 16px; border-radius: 12px; background: #f2f4f4; }
.amount select { width: 100%; height: 60px; padding: 0 18px; }
.amount-tool .link-button { margin-left: 16px; }
.readout { padding: 0 34px 0 28px; color: #808080; font-family: "Noto Sans CJK JP", sans-serif; }

.logo { position: absolute; left: 19px; bottom: 2px; font: 38px/44px Lato, sans-serif; font-weight: 700; -webkit-text-stroke: 1px #e6f3f3; paint-order: stroke; }
.g1 { color: #4a80f0; }
.g2 { color: #e84a3d; }
.g3 { color: #f2b40c; }
.g4 { color: #34a853; }
.credits { position: absolute; right: 0; bottom: 0; display: flex; gap: 24px; padding-left: 10px; font-size: 20px; line-height: 24px; white-space: nowrap; background: rgba(245, 245, 245, .6); font-family: Roboto, "Noto Sans CJK JP", sans-serif; }

/* selected areas */
.areas { position: absolute; right: 0; top: 12px; bottom: 52px; width: 354px; display: flex; flex-direction: column; background: #fff; border-radius: 8px; box-shadow: 0 4px 10px rgba(0, 0, 0, .35); }
.areas-head { display: flex; align-items: center; justify-content: space-between; height: 106px; padding: 0 32px; border-bottom: 2px solid #d2d2d2; }
.areas-head h2 { font-weight: 700; }
.save-link { display: flex; align-items: center; gap: 16px; color: var(--teal); font-size: 24px; }
.save-link svg { width: 26px; height: 26px; fill: none; stroke: currentColor; stroke-width: 2; }
.areas-count { display: flex; justify-content: space-between; align-items: center; height: 54px; padding: 0 31px 0 34px; font-size: 20px; color: #808080; border-bottom: 2px solid #d2d2d2; }
.areas-list { flex: 1; padding: 22px 22px 0 28px; }
.group { display: flow-root; height: 356px; }
.group + .group::before { content: ""; display: block; height: 2px; margin: -32px 0 30px 4px; background: #d2d2d2; }
.group h3 { display: flex; align-items: center; gap: 16px; height: 36px; font-size: 24px; font-weight: 700; color: #858585; }
.group h3 svg { width: 18px; height: 11px; margin: 0 7px 0 auto; fill: none; stroke: #666; stroke-width: 3; }
.group-count { display: flex; justify-content: space-between; height: 40px; font-size: 20px; line-height: 40px; color: #aaa; margin-bottom: 4px; }
.group li { display: flex; justify-content: space-between; align-items: center; height: 44px; padding-right: 7px; font-size: 24px; }
.group li button { width: 18px; height: 18px; background: linear-gradient(45deg, transparent 46%, #888 46% 54%, transparent 54%), linear-gradient(-45deg, transparent 46%, #888 46% 54%, transparent 54%); }
.release { display: block; margin-top: 8px; font-size: 20px; line-height: 40px; text-align: center; color: #858585; }
.areas-foot { display: flex; flex-direction: column; align-items: center; gap: 8px; padding: 18px 0 16px; font-size: 24px; line-height: 40px; border-top: 2px solid #d2d2d2; }
.clear { color: #fb8417; }
.recall { color: var(--teal); }

/* dialog */
.overlay { position: absolute; inset: 0; display: flex; justify-content: center; align-items: flex-start; padding: 102px 10px 0 0; background: rgba(25, 17, 2, .4); }
.modal { position: relative; width: 1438px; background: #fff; }
.close { position: absolute; right: 14px; top: -57px; width: 42px; height: 42px; }
.close svg { display: block; width: 42px; height: 42px; stroke: #fff; stroke-width: 6; }
.modal-body { padding: 0 64px 48px; }
.modal h1 { height: 167px; padding-top: 52px; font-size: 40px; font-weight: 700; line-height: 60px; text-align: center; color: #555; border-bottom: 2px solid var(--line); }
.lead { margin: 48px 0; }
.name-row { display: flex; align-items: center; margin-bottom: 48px; }
.name-row label { width: 239px; font-weight: 700; color: #555; }
.name-row input { width: 800px; height: 92px; padding: 0 28px; border: 4px solid var(--teal); border-radius: 6px; font-size: 32px; }
.name-row input::placeholder { color: #d3d3d3; opacity: 1; }
.details { display: grid; grid-template-columns: 239px 1fr; row-gap: 48px; }
.details dt { font-weight: 700; color: #555; }
.modal-foot { display: flex; justify-content: center; gap: 32px; padding: 32px 0 31px; border-top: 2px solid var(--line); }
.btn { display: block; width: 320px; height: 92px; background: var(--teal); color: #fff; font-weight: 700; }
.btn-ghost { background: #fff; color: var(--teal); border: 6px solid var(--teal); }
.marked { position: relative; }
.mark { position: absolute; border: 7px solid var(--mark); border-radius: 4px; pointer-events: none; }
.mark-save { inset: -12px -18px -13px -13px; }
.mark-star { right: 11px; top: 54px; width: 122px; height: 69px; }
```
